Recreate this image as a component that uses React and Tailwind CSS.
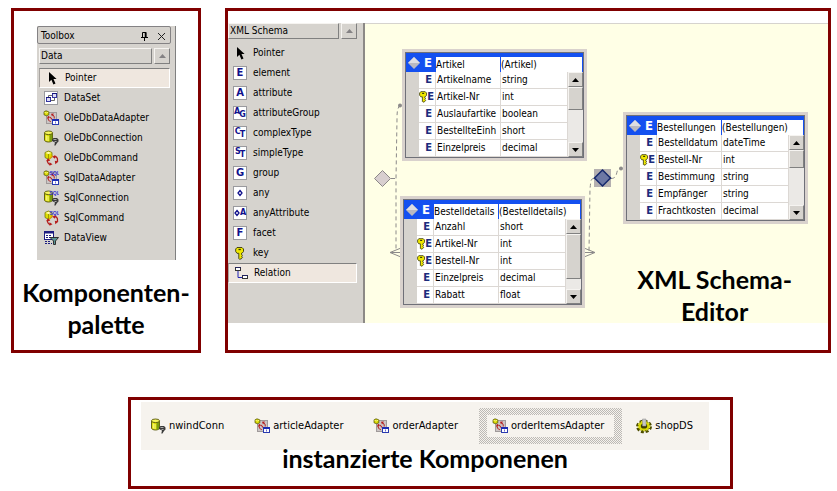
import React from "react";

const UI_FONT = "font-['DejaVu_Sans_Condensed','Liberation_Sans',sans-serif]";
const TITLE =
  "font-['Lato',sans-serif] text-[25px] leading-8 font-bold text-black text-center";

/* ---------- icons ---------- */

function Svg({ children }) {
  return (
    <svg width="16" height="16" viewBox="0 0 16 16" className="block shrink-0" aria-hidden="true">
      {children}
    </svg>
  );
}

function SqlMark() {
  return (
    <text x="6.500" y="4.500" fontSize="5" fontWeight="bold" fill="#3434d4" fontFamily="Liberation Sans, sans-serif">
      SQL
    </text>
  );
}

function PointerIcon() {
  return (
    <Svg>
      <path d="M5 2v10l2.400-2.200 2 4.700 2.100-.9-2-4.500h3.100z" fill="#000" />
    </Svg>
  );
}

function DataSetIcon() {
  return (
    <Svg>
      <rect x="1.500" y="1.500" width="13" height="13" fill="#fff" stroke="#9a9a9e" />
      <rect x="9.500" y="3.500" width="4" height="4" fill="#dcdcf4" stroke="#3434a0" />
      <rect x="3.500" y="7.500" width="4" height="4" fill="#dcdcf4" stroke="#3434a0" />
      <path d="M9 3.500h5M3 7.500h5" stroke="#14147c" />
      <path d="M8 10.500h3.500V8M5.500 7V5.500H9" fill="none" stroke="#666" />
    </Svg>
  );
}

function AdapterIcon({ sql }) {
  return (
    <Svg>
      <rect x="3.500" y="2.500" width="10" height="11" fill="#cbc5c5" stroke="#a09a9a" />
      <path d="M5.200 7.500c-.4 2 .6 3.700 2.600 4.200M11.200 8.500c.3-2-.5-3.400-2.200-4" fill="none" stroke="#b51c1c" />
      <path d="M7.200 7.200 5 5.800l-1 3zM9 6.500 8 3.800l3-.3z" fill="#b51c1c" />
      <path d="M7 7l3 3.500" stroke="#b51c1c" strokeWidth="1.100" />
      <path d="M1 1.800 3 .8l2.800 1v3L3.500 5.800 1 4.800z" fill="#d8d800" stroke="#4a4a00" strokeWidth=".7" />
      <path d="M1.500 2.300 3.400 3 5.300 2.200" fill="none" stroke="#ffff9a" strokeWidth=".8" />
      <rect x="9.500" y="9.500" width="6" height="5" fill="#fff" stroke="#2a3ab0" />
      <path d="M9 10h7" stroke="#1c2cb4" strokeWidth="2" />
      <path d="M12.500 11.500v2" stroke="#6b6bd0" />
      {sql && <SqlMark />}
    </Svg>
  );
}

function ConnectionIcon({ sql }) {
  return (
    <Svg>
      <path d="M1.500 3v7c0 1.200 1.900 2 4 2s4-.8 4-2V3z" fill="#dede00" stroke="#55550a" strokeWidth=".9" />
      <path d="M6.500 4v7.800c1.600-.2 2.700-.9 2.700-1.800V4z" fill="#7c9c10" />
      <ellipse cx="5.500" cy="2.800" rx="4" ry="1.800" fill="#f6f65a" stroke="#55550a" strokeWidth=".9" />
      <path d="M3.300 5.500v5M5 6v5" stroke="#ffffb0" strokeWidth=".8" />
      <path d="M9 9.500 10.500 8H14l1.500 1.500v2L14 13l-1.500 2.500h-1.200l.7-3-3-1.500z" fill="#3a3a3a" />
      <path d="M10.500 9.500h3M11.500 11.500h2" stroke="#b4b4b4" strokeWidth=".9" />
      {sql && <SqlMark />}
    </Svg>
  );
}

function CommandIcon({ sql }) {
  return (
    <Svg>
      <path d="M2 2.500 5.500 1l3.500 1.500v4.800L5.500 9.300 2 7.500z" fill="#dede00" stroke="#77770a" strokeWidth=".8" />
      <path d="M2.500 2.900 5.500 4l3-1.100-3-1.200z" fill="#ffffb0" />
      <path d="M5.500 4v5" stroke="#8c8c00" strokeWidth=".8" />
      <path d="M9.500 5.500 6 9.500" stroke="#e0a800" strokeWidth="1.300" />
      <path d="M4.700 10c-.6 2 .4 4 2.300 4.500M14 12c1.200-2.300.4-5-2-5.500" fill="none" stroke="#b51c1c" strokeWidth="1.300" />
      <path d="M3 11.200 5 8.200l2.300 2.600zM6.500 12.300l3 2-3 1.500zM12.300 5l-3 1.700 2.700 2zM11.800 10.800l3.700.6-3.200 2.800z" fill="#b51c1c" />
      {sql && <SqlMark />}
    </Svg>
  );
}

function DataViewIcon() {
  return (
    <Svg>
      <rect x="1.500" y="1.500" width="9" height="8" fill="#fff" stroke="#1c1c80" />
      <path d="M1 2.500h10" stroke="#1c1c80" strokeWidth="2" />
      <path d="M3 5.500h6M3 7.500h6M2 11.500h6M2 13.500h7" stroke="#1c1c80" strokeDasharray="2 1" />
      <path d="M7 7.500h8.500l-3 3.500v3.500h-2V11z" fill="#5c9494" stroke="#222" strokeWidth=".9" />
    </Svg>
  );
}

function KeyShape() {
  return (
    <>
      <path
        d="M5 2.500h5l1.500 1.500v2.500L10 8.300H9.500v1.200l1 .8-1 .9 1 1-1.200 1.600L7.500 14.300 6.800 13.500V8.300H5L3.700 6.500V4z"
        fill="#f0e800"
        stroke="#38380a"
        strokeWidth=".9"
      />
      <path d="M6.500 4.500h2.300" stroke="#38380a" strokeWidth="1.300" />
    </>
  );
}

function KeyIcon() {
  return (
    <Svg>
      <KeyShape />
    </Svg>
  );
}

function RelationIcon() {
  return (
    <Svg>
      <path d="M5 6v6.500h4" fill="none" stroke="#2424b4" />
      <rect x="2.500" y="2.500" width="5" height="3" fill="#fff" stroke="#333" />
      <rect x="9.500" y="10.500" width="5" height="3" fill="#fff" stroke="#333" />
      <path d="M2 2.500h6M9 10.500h6" stroke="#24245c" />
    </Svg>
  );
}

function GearIcon() {
  return (
    <Svg>
      <ellipse cx="8" cy="8.500" rx="6.500" ry="5.300" fill="none" stroke="#4e4e00" strokeWidth="3" strokeDasharray="2.800 1.800" />
      <ellipse cx="8" cy="8" rx="6" ry="4.900" fill="#d8d800" stroke="#5e5e00" strokeWidth=".8" />
      <ellipse cx="8" cy="8" rx="5.800" ry="4.700" fill="none" stroke="#f6f640" strokeDasharray="2 1.500" />
      <ellipse cx="8" cy="8" rx="3.200" ry="2.600" fill="#3c3c00" />
      <path d="M6.500 1h3.500v7H6.500z" fill="#c4c4c4" stroke="#8c8c8c" strokeWidth=".5" />
    </Svg>
  );
}

const LETTER_BOX =
  "mx-px flex h-[14px] w-[14px] shrink-0 items-center justify-center border border-[#9a9a9e] bg-white font-['DejaVu_Sans','Liberation_Sans',sans-serif] font-bold text-[#10108c]";

function LetterIcon({ a, b }) {
  return (
    <span className={LETTER_BOX}>
      {b ? (
        <span className="flex text-[8px] leading-none">
          <span className="pb-[3px]">{a}</span>
          <span className="-ml-px pt-[3px]">{b}</span>
        </span>
      ) : (
        <span className="text-[10px] leading-none">{a}</span>
      )}
    </span>
  );
}

function AnyIcon({ attribute }) {
  return (
    <span className={`${LETTER_BOX} text-[8px] leading-none`}>
      <svg width="6" height="8" viewBox="0 0 6 8" className="block shrink-0" aria-hidden="true">
        <path d="M3 1.500 5 4 3 6.500 1 4z" fill="none" stroke="#10108c" strokeWidth="1.300" />
      </svg>
      {attribute && <span>A</span>}
    </span>
  );
}

/* ---------- toolbox parts ---------- */

const RAISED = "border border-t-[#f6f4f1] border-l-[#f6f4f1] border-r-[#808080] border-b-[#808080] bg-[#d6d3ce]";

function Arrow({ down, color }) {
  return (
    <svg width="7" height="4" viewBox="0 0 7 4" className="block" aria-hidden="true">
      <path d={down ? "M0 0h7L3.500 4z" : "M0 4h7L3.500 0z"} fill={color} />
    </svg>
  );
}

function TabHeader({ label }) {
  return (
    <div className="flex h-4 gap-0.5">
      <button className={`flex flex-1 items-center pl-px text-left ${RAISED}`}>{label}</button>
      <button aria-label="Scroll up" className={`flex w-4 items-center justify-center ${RAISED}`}>
        <Arrow color="#848284" />
      </button>
    </div>
  );
}

function ToolItem({ icon, label, selected }) {
  return (
    <li>
      <button
        className={
          selected
            ? "flex h-5 w-full items-center gap-[5px] border border-t-[#808080] border-l-[#a8a4a0] border-r-white border-b-white bg-[#efe7df] pl-1 text-left"
            : "flex h-5 w-full items-center gap-[5px] pl-1 text-left"
        }
      >
        {icon}
        {label}
      </button>
    </li>
  );
}

const COMPONENTS = [
  ["Pointer", <PointerIcon />],
  ["DataSet", <DataSetIcon />],
  ["OleDbDataAdapter", <AdapterIcon />],
  ["OleDbConnection", <ConnectionIcon />],
  ["OleDbCommand", <CommandIcon />],
  ["SqlDataAdapter", <AdapterIcon sql />],
  ["SqlConnection", <ConnectionIcon sql />],
  ["SqlCommand", <CommandIcon sql />],
  ["DataView", <DataViewIcon />],
];

const SCHEMA_ITEMS = [
  ["Pointer", <PointerIcon />],
  ["element", <LetterIcon a="E" />],
  ["attribute", <LetterIcon a="A" />],
  ["attributeGroup", <LetterIcon a="A" b="G" />],
  ["complexType", <LetterIcon a="C" b="T" />],
  ["simpleType", <LetterIcon a="S" b="T" />],
  ["group", <LetterIcon a="G" />],
  ["any", <AnyIcon />],
  ["anyAttribute", <AnyIcon attribute />],
  ["facet", <LetterIcon a="F" />],
  ["key", <KeyIcon />],
  ["Relation", <RelationIcon />],
];

function ComponentPalette() {
  return (
    <section className="w-[190px] shrink-0 border-3 border-[#800000] pt-[15px] pb-2">
      <div className={`mr-[22px] ml-[23px] border-r border-[#808080] bg-[#d6d3ce] pr-1 pb-3 text-[10px] leading-3 text-black ${UI_FONT}`}>
        <div className="flex h-[18px] items-center rounded-xs border border-[#848284] pt-0.5 pr-1 pl-[3px]">
          <span className="flex-1">Toolbox</span>
          <button aria-label="Pin" className="mr-2">
            <svg width="9" height="9" viewBox="0 0 9 9" className="block" aria-hidden="true">
              <path d="M2.500 5V.5h3.500V5M1 5.500h7M4.500 6v3" fill="none" stroke="#000" />
              <path d="M5.500 0v5" stroke="#000" strokeWidth="1.500" />
            </svg>
          </button>
          <button aria-label="Close">
            <svg width="9" height="9" viewBox="0 0 9 9" className="block" aria-hidden="true">
              <path d="M1 1l7 7M8 1 1 8" stroke="#222" />
            </svg>
          </button>
        </div>
        <div className="mt-1 pr-px pl-0.5">
          <TabHeader label="Data" />
          <ul className="mt-1">
            {COMPONENTS.map(([label, icon], i) => (
              <ToolItem key={label} label={label} icon={icon} selected={i === 0} />
            ))}
          </ul>
        </div>
      </div>
      <h2 className={`mt-4 ${TITLE}`}>
        Komponenten-
        <br />
        palette
      </h2>
    </section>
  );
}

/* ---------- schema tables ---------- */

const HEAD_CELL = "h-[19px] border-t-4 border-r border-[#1450f0] bg-white p-0 text-left font-normal";
const BODY_CELL = "h-[17px] border-r border-b border-[#dcd8d4] bg-white p-0";

function FieldMark({ isKey }) {
  return (
    <span className="flex items-center justify-end pr-px font-['DejaVu_Sans','Liberation_Sans',sans-serif] text-[10px] leading-3 font-bold text-[#1c2c7c]">
      {isKey && (
        <svg width="8" height="12" viewBox="3 2 9 13" className="block shrink-0" aria-label="key">
          <KeyShape />
        </svg>
      )}
      <span className={isKey ? "" : "pr-0.5"}>E</span>
    </span>
  );
}

function ScrollBar({ thumb }) {
  return (
    <div className="flex h-[85px] flex-col bg-[#ebe9e6]">
      <button aria-label="Scroll up" className={`flex h-[15px] items-center justify-center ${RAISED}`}>
        <Arrow color="#000" />
      </button>
      <div className={`${thumb} ${RAISED}`} />
      <div className="flex-1" />
      <button aria-label="Scroll down" className={`flex h-[15px] items-center justify-center ${RAISED}`}>
        <Arrow down color="#000" />
      </button>
    </div>
  );
}

function SchemaTable({ name, place, thumb, rows }) {
  return (
    <div className={`absolute border-3 border-[#d9d2cd] ${place}`}>
      <div className="border border-[#6f7078]">
        <table className="w-[177px] table-fixed border-separate border-spacing-0 text-[10px] leading-3 whitespace-nowrap text-black">
          <colgroup>
            <col className="w-[13px]" />
            <col className="w-[17px]" />
            <col className="w-[65px]" />
            <col className="w-[67px]" />
            <col className="w-[15px]" />
          </colgroup>
          <thead>
            <tr>
              <th colSpan={2} className="h-[19px] bg-[#1450f0] p-0">
                <span className="flex items-center justify-between pr-1 pl-0.5 text-[13px] leading-4 font-bold text-white">
                  <svg width="12" height="12" viewBox="0 0 12 12" className="block" aria-hidden="true">
                    <path d="M6 0l6 6-6 6-6-6z" fill="#b9b9c1" />
                    <path d="M6 0l6 6H0z" fill="#dedee2" />
                  </svg>
                  E
                </span>
              </th>
              <th className={HEAD_CELL}>{name}</th>
              <th colSpan={2} className={HEAD_CELL}>
                ({name})
              </th>
            </tr>
          </thead>
          <tbody>
            {rows.map(([field, type, isKey], i) => (
              <tr key={field}>
                <td className="h-[17px] bg-[#d6d3ce] p-0" />
                <td className={BODY_CELL}>
                  <FieldMark isKey={isKey} />
                </td>
                <td className={`${BODY_CELL} pl-px`}>{field}</td>
                <td className={`${BODY_CELL} pl-px`}>{type}</td>
                {i === 0 && (
                  <td rowSpan={5} className="p-0">
                    <ScrollBar thumb={thumb} />
                  </td>
                )}
              </tr>
            ))}
          </tbody>
        </table>
      </div>
    </div>
  );
}

const ARTIKEL = [
  ["Artikelname", "string"],
  ["Artikel-Nr", "int", true],
  ["Auslaufartike", "boolean"],
  ["BestellteEinh", "short"],
  ["Einzelpreis", "decimal"],
];

const DETAILS = [
  ["Anzahl", "short"],
  ["Artikel-Nr", "int", true],
  ["Bestell-Nr", "int", true],
  ["Einzelpreis", "decimal"],
  ["Rabatt", "float"],
];

const BESTELLUNGEN = [
  ["Bestelldatum", "dateTime"],
  ["Bestell-Nr", "int", true],
  ["Bestimmung", "string"],
  ["Empfänger", "string"],
  ["Frachtkosten", "decimal"],
];

function Connectors() {
  return (
    <svg width="463" height="299" viewBox="0 0 463 299" className="absolute top-0 left-0" aria-hidden="true">
      <g fill="none" stroke="#8c8a8a">
        <path d="M35 81c-3 4-3 8-3 14l-1 60v72M26 154.500h5" strokeDasharray="4 3" />
        <path d="M229 154.500c-4 0-3 4-4 10l-1 63M246 154.500c8 0 4-10 9-10" strokeDasharray="4 3" />
        <path d="M36 224l-11 4.500L36 233M25 228.500h11M219 224l11 4.500-11 4.500M230 228.500h-11" />
      </g>
      <circle cx="35" cy="81.500" r="2" fill="#8c8a8a" />
      <circle cx="256" cy="144.500" r="2" fill="#8c8a8a" />
      <path d="M17.500 146.500l8 8-8 8-8-8z" fill="#d8cfcf" stroke="#8c8888" />
      <rect x="229" y="145" width="17" height="18" fill="#b4b0b0" />
      <path d="M237.500 146l8 8-8 8-8-8z" fill="#6c78a4" stroke="#14286c" strokeWidth="1.500" />
    </svg>
  );
}

function SchemaEditor() {
  return (
    <section className="min-w-0 flex-1 border-3 border-[#800000] pt-3 pb-[27px]">
      <div className={`flex h-full text-[10px] leading-3 text-black ${UI_FONT}`}>
        <div className="w-[137px] shrink-0 border-r-2 border-[#8c8986] bg-[#d6d3ce] pb-10">
          <div className="pr-1.5">
            <TabHeader label="XML Schema" />
          </div>
          <ul className="mt-1 pr-1.5">
            {SCHEMA_ITEMS.map(([label, icon]) => (
              <ToolItem key={label} label={label} icon={icon} selected={label === "Relation"} />
            ))}
          </ul>
        </div>
        <div className="relative min-w-0 flex-1 border-t border-[#d6d3ce] bg-[#ffffe6]">
          <Connectors />
          <SchemaTable name="Artikel" rows={ARTIKEL} thumb="h-[23px]" place="top-[25px] left-[37px]" />
          <SchemaTable name="Bestelldetails" rows={DETAILS} thumb="h-[45px]" place="top-[172px] left-[35px]" />
          <SchemaTable name="Bestellungen" rows={BESTELLUNGEN} thumb="h-[18px]" place="top-[88px] left-[258px]" />
          <h2 className={`absolute right-9 -bottom-1 ${TITLE}`}>
            XML Schema-
            <br />
            Editor
          </h2>
        </div>
      </div>
    </section>
  );
}

/* ---------- component tray ---------- */

function TrayItem({ icon, label }) {
  return (
    <button className="flex items-center gap-[3px] pr-4 pl-[9px]">
      {icon}
      {label}
    </button>
  );
}

function SelectedTrayItem({ icon, label }) {
  return (
    <div className="bg-[conic-gradient(#bcb9b5_25%,#f6f3ee_0_50%,#bcb9b5_0_75%,#f6f3ee_0)] bg-[size:2px_2px] px-2 py-[7px]">
      <button className="flex items-center gap-[3px] bg-[#f6f3ee] py-[3px] pr-2.5 pl-[5px]">
        {icon}
        {label}
      </button>
    </div>
  );
}

function ComponentTray() {
  return (
    <section className="mt-11 mr-[98px] ml-[117px] border-3 border-[#800000] pt-0.5 pb-3">
      <div className="mr-[21px] ml-2.5">
        <div className={`flex h-12 items-center justify-between bg-[#f6f3ee] text-[11px] leading-4 text-black ${UI_FONT}`}>
          <TrayItem icon={<ConnectionIcon />} label="nwindConn" />
          <TrayItem icon={<AdapterIcon />} label="articleAdapter" />
          <TrayItem icon={<AdapterIcon />} label="orderAdapter" />
          <SelectedTrayItem icon={<AdapterIcon />} label="orderItemsAdapter" />
          <TrayItem icon={<GearIcon />} label="shopDS" />
        </div>
        <h2 className={`-mt-2 ${TITLE}`}>instanzierte Komponenen</h2>
      </div>
    </section>
  );
}

export default function App() {
  return (
    <main className="bg-white pt-2 pr-1.5 pb-0.5 pl-[11px]">
      <div className="flex gap-6">
        <ComponentPalette />
        <SchemaEditor />
      </div>
      <ComponentTray />
    </main>
  );
}
